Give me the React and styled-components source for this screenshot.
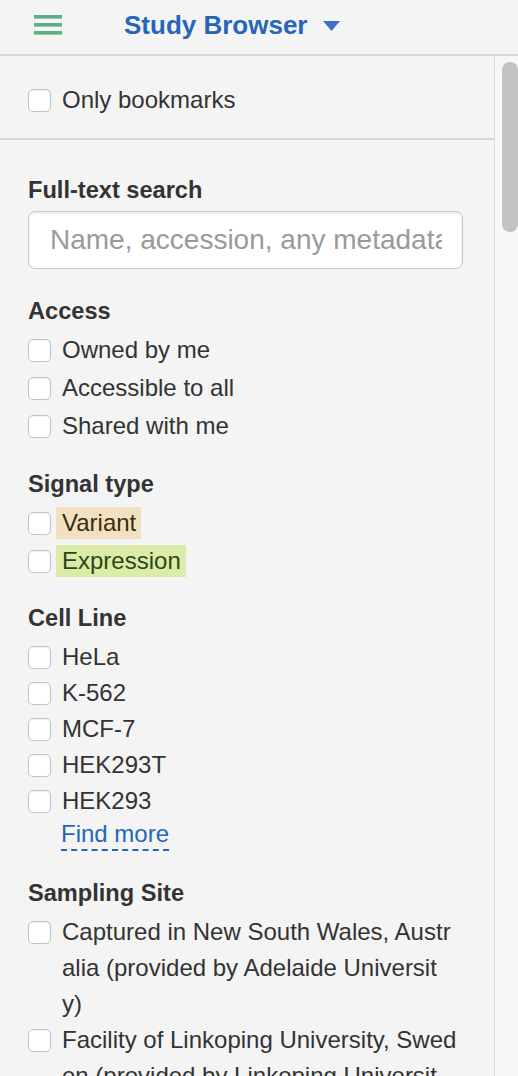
import React from "react";
import styled, { createGlobalStyle } from "styled-components";

const GlobalStyle = createGlobalStyle`
    body {
        margin: 0;
        background: #f4f4f4;
        font-family: "Liberation Sans", Arial, sans-serif;
        color: #333;
    }
`;

const filters = [
    {
        title: "Access",
        gap: 2,
        space: 24,
        items: [{ name: "Owned by me" }, { name: "Accessible to all" }, { name: "Shared with me" }],
    },
    {
        title: "Signal type",
        gap: 2,
        space: 22,
        items: [
            { name: "Variant", tag: "variant" },
            { name: "Expression", tag: "expression" },
        ],
    },
    {
        title: "Cell Line",
        gap: 0,
        space: 21,
        items: [{ name: "HeLa" }, { name: "K-562" }, { name: "MCF-7" }, { name: "HEK293T" }, { name: "HEK293" }],
        more: true,
    },
    {
        title: "Sampling Site",
        gap: 0,
        space: 24,
        items: [
            { name: "Captured in New South Wales, Australia (provided by Adelaide University)" },
            { name: "Facility of Linkoping University, Sweden (provided by Linkoping University)" },
        ],
    },
];

const tagColors = {
    variant: { bg: "#f1e1c0", fg: "#3d2b0f" },
    expression: { bg: "#dbeca9", fg: "#2c4811" },
};

const Option = ({ name, tag }) => (
    <Row>
        <Check type="checkbox" />
        {tag ? <Tag $kind={tag}>{name}</Tag> : <OptionText>{name}</OptionText>}
    </Row>
);

const App = () => {
    return (
        <Page>
            <GlobalStyle />
            <Header>
                <Burger width="28" height="20" viewBox="0 0 28 20">
                    <rect x="0" y="0" width="28" height="3.6" />
                    <rect x="0" y="8" width="28" height="3.6" />
                    <rect x="0" y="16" width="28" height="3.6" />
                </Burger>
                <Title>
                    Study Browser
                    <svg width="17" height="10" viewBox="0 0 17 10">
                        <path d="M0 0 H17 L8.5 10 Z" fill="#3a72c4" />
                    </svg>
                </Title>
            </Header>
            <Body>
                <Panel>
                    <BookmarkBar>
                        <Option name="Only bookmarks" />
                    </BookmarkBar>
                    <Filters>
                        <Heading>Full-text search</Heading>
                        <SearchInput placeholder="Name, accession, any metadata" />
                        {filters.map((group) => (
                            <Group key={group.title} $space={group.space}>
                                <Heading>{group.title}</Heading>
                                <OptionList $gap={group.gap}>
                                    {group.items.map((item) => (
                                        <Option key={item.name} {...item} />
                                    ))}
                                </OptionList>
                                {group.more && (
                                    <MoreRow>
                                        <MoreLink href="#">Find more</MoreLink>
                                    </MoreRow>
                                )}
                            </Group>
                        ))}
                    </Filters>
                </Panel>
                <ScrollTrack>
                    <Thumb />
                </ScrollTrack>
            </Body>
        </Page>
    );
};

const Page = styled.div`
    width: 518px;
    height: 1076px;
    overflow: hidden;
    background: #f4f4f4;
`;

const Header = styled.header`
    display: flex;
    align-items: center;
    height: 56px;
    padding-bottom: 4px;
    box-sizing: border-box;
    border-bottom: 2px solid #d6d6d6;
`;

const Burger = styled.svg`
    margin-left: 34px;
    fill: #5aae7f;
`;

const Title = styled.div`
    display: flex;
    align-items: center;
    gap: 15px;
    margin-left: 62px;
    font-size: 26px;
    font-weight: bold;
    color: #2765b8;
    svg {
        margin-top: 2px;
    }
`;

const Body = styled.div`
    display: flex;
    height: 1020px;
    overflow: hidden;
`;

const Panel = styled.div`
    width: 494px;
    flex-shrink: 0;
    border-right: 1px solid #dedede;
`;

const ScrollTrack = styled.div`
    flex: 1;
    background: #f7f7f7;
    padding: 6px 0 0 7px;
`;

const Thumb = styled.div`
    width: 16px;
    height: 170px;
    border-radius: 8px;
    background: #c2c2c2;
`;

const BookmarkBar = styled.div`
    padding: 26px 28px 20px;
    border-bottom: 2px solid #d6d6d6;
`;

const Filters = styled.div`
    padding: 32px 31px 0 28px;
`;

const Heading = styled.div`
    font-size: 23.6px;
    font-weight: bold;
    line-height: 36px;
    color: #333;
    margin-bottom: 3px;
`;

const SearchInput = styled.input`
    display: block;
    width: 100%;
    height: 58px;
    box-sizing: border-box;
    padding: 0 20px 0 21px;
    border: 1px solid #cacaca;
    border-radius: 7px;
    background: #fff;
    box-shadow: inset 0 1px 3px rgba(0, 0, 0, 0.12);
    font-family: inherit;
    font-size: 28px;
    color: #333;
    outline: none;
    &::placeholder {
        color: #9a9a9a;
    }
`;

const Group = styled.section`
    margin-top: ${(p) => p.$space}px;
`;

const OptionList = styled.div`
    display: flex;
    flex-direction: column;
    gap: ${(p) => p.$gap}px;
`;

const Row = styled.label`
    display: flex;
    align-items: flex-start;
    font-size: 24px;
    line-height: 36px;
    color: #333;
`;

const Check = styled.input`
    appearance: none;
    flex-shrink: 0;
    width: 23px;
    height: 23px;
    margin: 6.5px 11px 0 0;
    box-sizing: border-box;
    border: 1.5px solid #c3c3c3;
    border-radius: 5px;
    background: #fff;
    box-shadow: inset 0 1px 1px rgba(0, 0, 0, 0.05);
`;

const OptionText = styled.span`
    max-width: 394.6px;
    word-break: break-all;
`;

const Tag = styled.span`
    margin: 2px 0 2px -6px;
    padding: 0 5px 0 6px;
    line-height: 32px;
    background: ${(p) => tagColors[p.$kind].bg};
    color: ${(p) => tagColors[p.$kind].fg};
`;

const MoreRow = styled.div`
    padding-left: 33px;
    height: 32px;
`;

const MoreLink = styled.a`
    display: inline-block;
    font-size: 24px;
    line-height: 30px;
    color: #2765b8;
    text-decoration: none;
    border-bottom: 2px dashed #2765b8;
`;

export default App;
